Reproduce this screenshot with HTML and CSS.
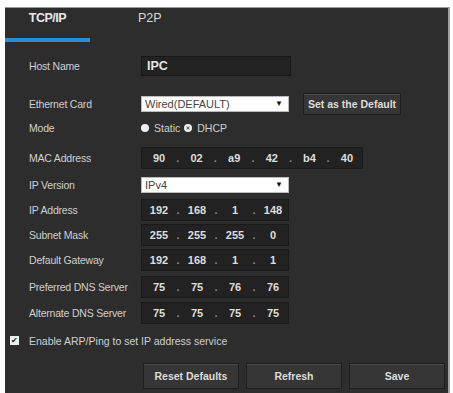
FILE: index.html
```html
<!DOCTYPE html>
<html lang="en">
<head>
    <meta charset="UTF-8">
    <meta name="viewport" content="width=device-width, initial-scale=1.0">
    <link rel="stylesheet" href="styles.css">
    <title>TCP/IP</title>
</head>
<body>
    <div class="panel">
        <div class="tabs">
            <div class="tab active">TCP/IP</div>
            <div class="tab">P2P</div>
        </div>
        <div class="form">
            <div class="row host">
                <span class="label">Host Name</span>
                <div class="text-box">IPC</div>
            </div>
            <div class="row eth">
                <span class="label">Ethernet Card</span>
                <div class="select">Wired(DEFAULT)<span class="arrow">&#9660;</span></div>
                <button class="btn small">Set as the Default</button>
            </div>
            <div class="row mode">
                <span class="label">Mode</span>
                <div class="radios">
                    <span class="radio"></span><span>Static</span>
                    <span class="radio checked"></span><span>DHCP</span>
                </div>
            </div>
            <div class="row mac">
                <span class="label">MAC Address</span>
                <div class="ip-box wide">
                    <span class="seg">90</span><span class="dot">.</span>
                    <span class="seg">02</span><span class="dot">.</span>
                    <span class="seg">a9</span><span class="dot">.</span>
                    <span class="seg">42</span><span class="dot">.</span>
                    <span class="seg">b4</span><span class="dot">.</span>
                    <span class="seg">40</span>
                </div>
            </div>
            <div class="row ipver">
                <span class="label">IP Version</span>
                <div class="select">IPv4<span class="arrow">&#9660;</span></div>
            </div>
            <div class="row ip">
                <span class="label">IP Address</span>
                <div class="ip-box">
                    <span class="seg">192</span><span class="dot">.</span>
                    <span class="seg">168</span><span class="dot">.</span>
                    <span class="seg">1</span><span class="dot">.</span>
                    <span class="seg">148</span>
                </div>
            </div>
            <div class="row ip">
                <span class="label">Subnet Mask</span>
                <div class="ip-box">
                    <span class="seg">255</span><span class="dot">.</span>
                    <span class="seg">255</span><span class="dot">.</span>
                    <span class="seg">255</span><span class="dot">.</span>
                    <span class="seg">0</span>
                </div>
            </div>
            <div class="row ip">
                <span class="label">Default Gateway</span>
                <div class="ip-box">
                    <span class="seg">192</span><span class="dot">.</span>
                    <span class="seg">168</span><span class="dot">.</span>
                    <span class="seg">1</span><span class="dot">.</span>
                    <span class="seg">1</span>
                </div>
            </div>
            <div class="row ip dns">
                <span class="label">Preferred DNS Server</span>
                <div class="ip-box">
                    <span class="seg">75</span><span class="dot">.</span>
                    <span class="seg">75</span><span class="dot">.</span>
                    <span class="seg">76</span><span class="dot">.</span>
                    <span class="seg">76</span>
                </div>
            </div>
            <div class="row ip alt">
                <span class="label">Alternate DNS Server</span>
                <div class="ip-box">
                    <span class="seg">75</span><span class="dot">.</span>
                    <span class="seg">75</span><span class="dot">.</span>
                    <span class="seg">75</span><span class="dot">.</span>
                    <span class="seg">75</span>
                </div>
            </div>
            <div class="check-row">
                <span class="checkbox">&#10004;</span>
                <span>Enable ARP/Ping to set IP address service</span>
            </div>
            <div class="actions">
                <button class="btn">Reset Defaults</button>
                <button class="btn">Refresh</button>
                <button class="btn">Save</button>
            </div>
        </div>
    </div>
</body>
</html>
```

FILE: styles.css
```css
body {
    margin: 0;
    background: #fff;
    font-family: "Liberation Sans", Arial, sans-serif;
}
.panel {
    margin: 7px 1px 0 5px;
    width: 445px;
    height: 386px;
    background: #2d2d2d;
    border-top: 1px solid #9a9a9a;
    border-right: 2px solid #a0a0a0;
    box-sizing: border-box;
}
/* tabs */
.tabs {
    display: flex;
    height: 34px;
}
.tab {
    width: 85px;
    padding-top: 3px;
    font-size: 12.5px;
    font-weight: bold;
    color: #e8e8e8;
    text-align: center;
    box-sizing: border-box;
}
.tab + .tab {
    width: auto;
    margin-left: 48px;
    font-weight: normal;
    color: #d8d8d8;
}
.tab.active {
    border-bottom: 4px solid #2d8fd8;
    height: 34px;
    letter-spacing: -0.5px;
}
.form {
    padding-left: 24px;
}
.row {
    display: flex;
    align-items: center;
    height: 22px;
    margin-top: 3px;
}
.label {
    width: 112px;
    flex-shrink: 0;
    font-size: 10.5px;
    color: #d0d0d0;
    letter-spacing: -0.2px;
}
.row.host { margin-top: 14px; height: 20px; }
.row.eth { margin-top: 17px; }
.row.mode { margin-top: 5px; height: 16px; }
.row.mac { margin-top: 11px; }
.row.ipver { margin-top: 7px; height: 17px; }
.row.ip { margin-top: 3px; }
.row.ipver + .row.ip { margin-top: 6px; }
.row.dns { margin-top: 5px; }
.row.alt { margin-top: 4px; }
.text-box {
    width: 150px;
    height: 20px;
    background: #222;
    border: 1px solid #181818;
    box-sizing: border-box;
    padding-left: 5px;
    line-height: 18px;
    font-size: 12.5px;
    font-weight: bold;
    color: #e6e6e6;
}
.select {
    position: relative;
    width: 148px;
    height: 16px;
    background: #fff;
    border: 1px solid #bbb;
    box-sizing: border-box;
    padding-left: 3px;
    line-height: 14px;
    font-size: 11px;
    color: #444;
}
.arrow {
    position: absolute;
    right: 5px;
    top: 0;
    font-size: 8px;
    color: #111;
}
.btn {
    background: #363636;
    border: 1px solid #1e1e1e;
    box-shadow: inset 0 1px 0 #4a4a4a;
    color: #dcdcdc;
    font-family: inherit;
    font-size: 10.5px;
    font-weight: bold;
    padding: 0;
}
.btn.small {
    margin-left: 14px;
    width: 98px;
    height: 22px;
}
.radios {
    display: flex;
    align-items: center;
    font-size: 10.5px;
    color: #d0d0d0;
}
.radio {
    width: 8px;
    height: 8px;
    border-radius: 50%;
    background: #eee;
    margin-right: 5px;
    box-sizing: border-box;
}
.radio.checked {
    margin-left: 4px;
    border: 2px solid #eee;
    background: #333;
    box-shadow: inset 0 0 0 1px #eee;
}
.ip-box {
    display: flex;
    align-items: center;
    width: 148px;
    height: 22px;
    background: #222;
    border: 1px solid #1a1a1a;
    box-sizing: border-box;
    font-size: 11px;
    font-weight: bold;
    color: #dedede;
}
.ip-box.wide {
    width: 222px;
}
.seg {
    width: 30px;
    text-align: center;
}
.ip-box .seg:first-child {
    margin-left: 2px;
}
.dot {
    width: 8px;
    text-align: center;
    color: #888;
}
.ip-box.wide .seg {
    width: 32px;
}
.check-row {
    display: flex;
    align-items: center;
    margin: 10px 0 0 -19px;
    height: 13px;
    font-size: 10.5px;
    color: #d0d0d0;
}
.checkbox {
    width: 9px;
    height: 9px;
    background: #eee;
    color: #222;
    font-size: 8px;
    line-height: 9px;
    text-align: center;
    margin-right: 10px;
}
.actions {
    display: flex;
    gap: 7px;
    margin: 16px 0 0 114px;
}
.actions .btn {
    width: 96px;
    height: 26px;
}
```
